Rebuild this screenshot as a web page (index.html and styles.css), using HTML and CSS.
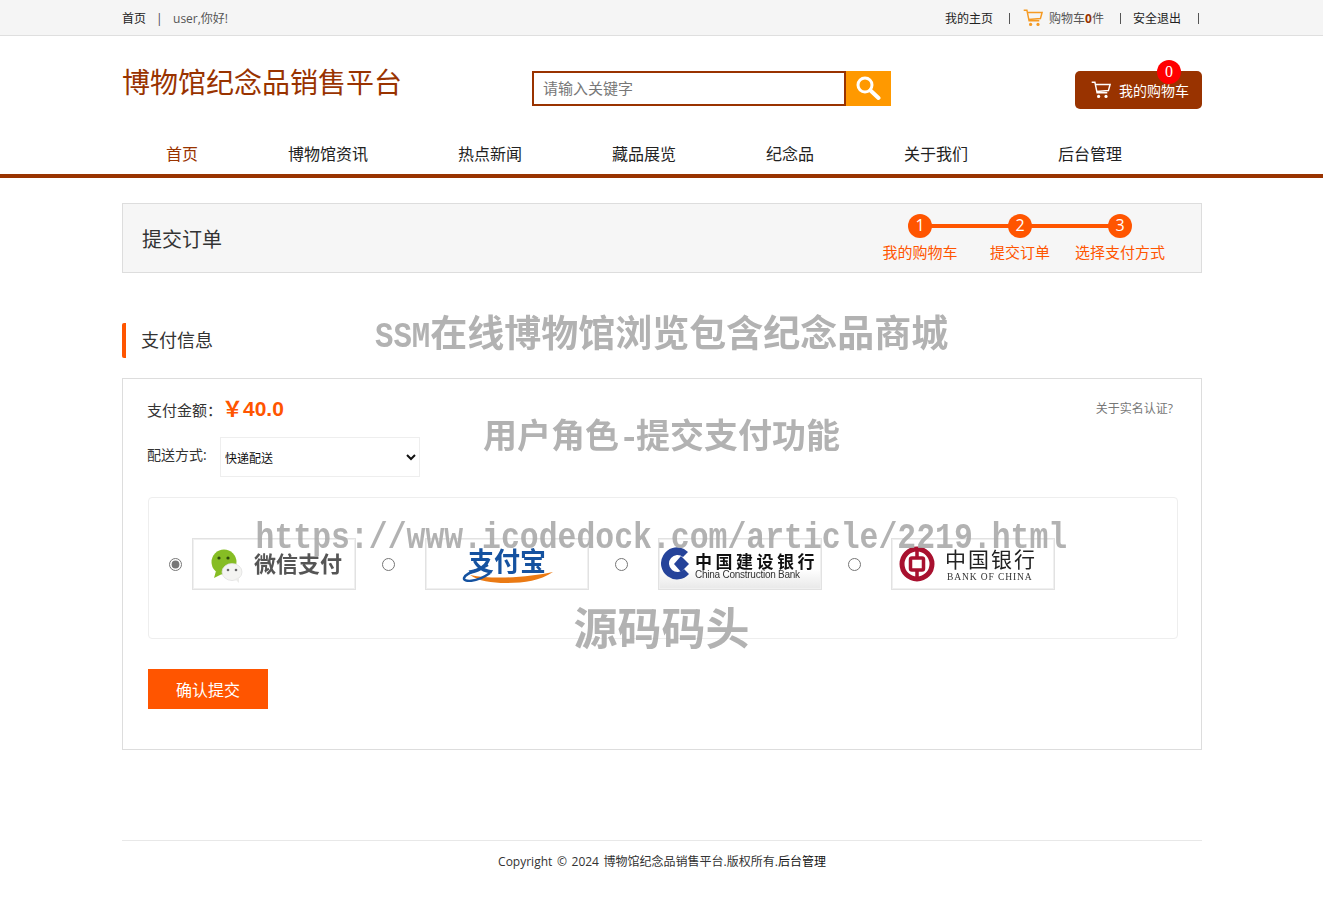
FILE: index.html
```html
<!DOCTYPE html>
<html lang="zh-CN">
<head>
<meta charset="utf-8">
<title>提交订单</title>
<link rel="stylesheet" href="styles.css">
</head>
<body>
<div class="page">
  <div class="topbar">
    <div class="wrap topbar-in">
      <div class="top-left">
        <a class="tl-home">首页</a><span class="tl-sep">|</span><span class="tl-user">user,你好!</span>
      </div>
      <div class="top-right">
        <a class="tr-a">我的主页</a><i class="tr-sep tr-sep-1"></i>
        <svg class="tr-cart" viewBox="0 0 20 18" width="20" height="18"><path d="M0.7 1.2h3.2l2.2 10.600h10.200M4.500 3.400h14.600l-1.700 6.200-11.900 1" fill="none" stroke="#f59a23" stroke-width="1.500"/><circle cx="7.600" cy="15.400" r="1.600" fill="#f59a23"/><circle cx="15" cy="15.400" r="1.600" fill="#f59a23"/></svg>
        <span class="tr-count">购物车<b>0</b>件</span><i class="tr-sep tr-sep-2"></i>
        <a class="tr-a">安全退出</a><i class="tr-sep tr-sep-3"></i>
      </div>
    </div>
  </div>

  <div class="wrap header">
    <h1 class="logo">博物馆纪念品销售平台</h1>
    <form class="search">
      <input class="search-input" type="text" placeholder="请输入关键字">
      <button class="search-btn" type="button" aria-label="搜索">
        <svg viewBox="0 0 26 26" width="26" height="26"><circle cx="10" cy="10" r="7" fill="none" stroke="#fff" stroke-width="3"/><path d="M15.500 15.500l8 7.500" stroke="#fff" stroke-width="4" stroke-linecap="round"/></svg>
      </button>
    </form>
    <a class="cart-btn">
      <svg viewBox="0 0 20 18" width="20" height="18"><path d="M0.7 1.2h3.2l2.2 10.600h10.200M4.500 3.400h14.600l-1.700 6.200-11.900 1" fill="none" stroke="#fff" stroke-width="1.500"/><circle cx="7.600" cy="15.400" r="1.600" fill="#fff"/><circle cx="15" cy="15.400" r="1.600" fill="#fff"/></svg>
      <span>我的购物车</span>
      <em class="badge">0</em>
    </a>
  </div>

  <nav class="nav">
    <div class="wrap nav-in">
      <a class="nav-item active">首页</a>
      <a class="nav-item">博物馆资讯</a>
      <a class="nav-item">热点新闻</a>
      <a class="nav-item">藏品展览</a>
      <a class="nav-item">纪念品</a>
      <a class="nav-item">关于我们</a>
      <a class="nav-item">后台管理</a>
    </div>
  </nav>

  <main class="wrap">
    <section class="steps-box">
      <h2 class="steps-title">提交订单</h2>
      <ol class="steps">
        <li class="step"><span class="step-num">1</span><span class="step-label">我的购物车</span></li>
        <li class="step"><span class="step-num">2</span><span class="step-label">提交订单</span></li>
        <li class="step"><span class="step-num">3</span><span class="step-label">选择支付方式</span></li>
      </ol>
    </section>

    <h3 class="sec-title">支付信息</h3>

    <section class="panel">
      <div class="amount-row">
        <span class="label label-pay">支付金额：</span><strong class="amount">￥40.0</strong>
        <a class="realname">关于实名认证?</a>
      </div>
      <div class="ship-row">
        <span class="label label-ship">配送方式:</span>
        <select class="ship-select"><option>快递配送</option></select>
      </div>
      <div class="pay-box">
        <label class="pay-opt pay-first">
          <input type="radio" name="pay" checked>
          <span class="pay-img">
            <svg viewBox="0 0 162 50" width="162" height="50">
              <circle cx="31" cy="23" r="12.500" fill="#86bd24"/><path d="M23 32l-2 7 8-4z" fill="#86bd24"/>
              <circle cx="26" cy="19" r="1.600" fill="#2d4a0a"/><circle cx="35" cy="19" r="1.600" fill="#2d4a0a"/>
              <ellipse cx="39" cy="33" rx="10" ry="8.500" fill="#f4f4f2" stroke="#dcdcdc" stroke-width=".7"/><path d="M42 40l4 4v-6z" fill="#ececea"/>
              <circle cx="35" cy="31" r="1.300" fill="#666"/><circle cx="43" cy="31" r="1.300" fill="#666"/>
              <text class="t-wx" x="61" y="33">微信支付</text>
            </svg>
          </span>
        </label>
        <label class="pay-opt">
          <input type="radio" name="pay">
          <span class="pay-img">
            <svg viewBox="0 0 162 50" width="162" height="50">
              <path d="M44 36c24 5 60 2 83-3-14 9-28 11-47 11-14 0-28-2-36-8z" fill="#ea7a14"/>
              <path d="M62 26c-8 5-22 7-24 13-1 4 12 5 26-5" fill="none" stroke="#1552a0" stroke-width="2.400"/>
              <text class="t-ali" x="42" y="32">支付宝</text>
            </svg>
          </span>
        </label>
        <label class="pay-opt">
          <input type="radio" name="pay">
          <span class="pay-img pay-ccb">
            <svg viewBox="0 0 162 50" width="162" height="50">
              <path d="M25 10a16 16 0 1 0 5 25l-5-5a8.500 8.500 0 1 1-1-12l5-5z" fill="#25439a"/>
              <path d="M22 17l8 8-8 8-7-8z" fill="#25439a"/>
              <text class="t-ccb" x="36" y="29">中国建设银行</text>
              <text class="t-ccb-en" x="36" y="39">China Construction Bank</text>
            </svg>
          </span>
        </label>
        <label class="pay-opt">
          <input type="radio" name="pay">
          <span class="pay-img">
            <svg viewBox="0 0 162 50" width="162" height="50">
              <circle cx="25" cy="25" r="15" fill="none" stroke="#a8112f" stroke-width="5"/>
              <rect x="18.500" y="19" width="13" height="12" rx="1.500" fill="none" stroke="#a8112f" stroke-width="3.500"/>
              <path d="M25 10v9M25 31v9" stroke="#a8112f" stroke-width="3.500"/>
              <text class="t-boc" x="53" y="28">中国银行</text>
              <text class="t-boc-en" x="55" y="41">BANK OF CHINA</text>
            </svg>
          </span>
        </label>
      </div>
      <button class="submit" type="button">确认提交</button>
    </section>
  </main>

  <footer class="wrap footer">Copyright © 2024 博物馆纪念品销售平台.版权所有.<a class="footer-link">后台管理</a></footer>

  <div class="watermark">
    <p class="wm wm-1"><span class="wm-latin wm-ssm">SSM</span>在线博物馆浏览包含纪念品商城</p>
    <p class="wm wm-2">用户角色<span class="wm-latin">-</span>提交支付功能</p>
    <p class="wm wm-3"><span class="wm-latin wm-url">https://www.icodedock.com/article/2219.html</span></p>
    <p class="wm wm-4">源码码头</p>
  </div>
</div>
</body>
</html>
```
FILE: styles.css
```css
* { box-sizing: border-box; }
html, body { margin: 0; padding: 0; background: #fff; }
body { font-family: "Open Sans", "Noto Sans CJK SC", sans-serif; color: #333; font-size: 14px; }
p, h1, h2, h3, ol { margin: 0; padding: 0; font-weight: normal; }
ol { list-style: none; }
a { color: inherit; text-decoration: none; }
.page { position: relative; height: 914px; overflow: hidden; }
.wrap { width: 1080px; margin-left: 122px; }

.topbar { height: 36px; background: #f5f5f5; border-bottom: 1px solid #dfdfdf; font-size: 12px; line-height: 37px; }
.topbar-in { display: flex; justify-content: space-between; }
.top-left { display: flex; color: #222; }
.tl-sep { margin: 0 14px 0 10px; color: #444; width: 3px; }
.tl-user { color: #555; }
.top-right { display: flex; align-items: center; color: #222; height: 36px; }
.tr-sep { width: 1px; height: 11px; background: #555; margin: 0 14px 0 16px; }
.tr-sep-1 { margin-right: 13px; }
.tr-sep-2 { margin-right: 12px; }
.tr-sep-3 { margin: 0 3px 0 17px; }
.tr-cart { margin-right: 6px; }
.tr-count { color: #555; }
.tr-count b { color: #993300; }

.header { position: relative; height: 96px; display: flex; align-items: flex-start; }
.logo { font-size: 28px; line-height: 40px; margin-top: 26px; color: #993300; width: 410px; }
.search { display: flex; margin-top: 35px; height: 35px; }
.search-input { width: 314px; height: 35px; border: 2px solid #993300; padding: 0 9px 3px; font: 15px "Noto Sans CJK SC", sans-serif; color: #333; outline: none; }
.search-input::placeholder { color: #777; }
.search-btn { width: 45px; height: 35px; border: 0; padding: 1px 2px 0 0; background: #ff9900; }
.cart-btn { position: relative; margin: 35px 0 0 184px; width: 127px; height: 38px; background: #993300; color: #fff; border-radius: 5px; display: flex; align-items: center; padding: 0 0 1px 16px; font-size: 14px; gap: 8px; white-space: nowrap; }
.badge { position: absolute; left: 82px; top: -11px; width: 24px; height: 24px; border-radius: 50%; background: #f00; color: #fff; text-align: center; font: normal 16px/24px "Liberation Serif", "Noto Sans CJK SC", serif; }

.nav { height: 46px; border-bottom: 4px solid #993300; }
.nav-in { display: flex; }
.nav-item { padding: 0 45px; font-size: 16px; line-height: 44px; color: #222; white-space: nowrap; }
.nav-item:first-child { padding-left: 44px; }
.nav-item.active { color: #993300; }

.steps-box { margin-top: 25px; height: 70px; background: #f6f6f6; border: 1px solid #ddd; display: flex; justify-content: space-between; }
.steps-title { font-size: 20px; line-height: 71px; padding-left: 19px; color: #333; }
.steps { display: flex; padding: 10px 31px 0 0; }
.step { position: relative; width: 100px; display: flex; flex-direction: column; align-items: center; }
.step + .step::before { content: ""; position: absolute; left: -39px; width: 78px; top: 10px; height: 4px; background: #ff5500; }
.step-num { position: relative; width: 24px; height: 24px; border-radius: 50%; background: #ff5500; color: #fff; text-align: center; font-size: 16px; line-height: 23px; }
.step-label { font-size: 15px; line-height: 22px; margin-top: 3px; color: #ff5500; white-space: nowrap; }

.sec-title { margin-top: 50px; height: 35px; border-left: 4px solid #ff5500; border-radius: 2px; padding-left: 15px; font-size: 18px; line-height: 35px; color: #333; }

.panel { margin-top: 20px; height: 372px; border: 1px solid #ddd; padding: 0 24px 0 25px; }
.label { color: #333; font-size: 14px; }
.label-ship { width: 73px; margin-left: -1px; }
.amount-row { position: relative; display: flex; align-items: baseline; height: 58px; padding-top: 13px; }
.amount { font: bold 21px/34px "Liberation Sans", "Noto Sans CJK SC", sans-serif; color: #ff5500; }
.label-pay { width: 75px; margin-left: -1px; font-size: 15px; white-space: nowrap; }
.realname { position: absolute; right: 4px; top: 21px; font-size: 12px; line-height: 18px; color: #777; }
.ship-row { display: flex; align-items: flex-start; line-height: 36px; }
.ship-select { width: 200px; height: 40px; border: 1px solid #eee; background: #fff; font: 12px "Noto Sans CJK SC", sans-serif; color: #111; outline: none; }
.pay-box { width: 1030px; margin-top: 20px; height: 142px; border: 1px solid #eee; border-radius: 4px; padding: 40px 0 0 20px; display: flex; gap: 26px; }
.pay-opt { display: flex; align-items: flex-start; }
.pay-opt input { width: 13px; height: 13px; margin: 20px 30px 0 0; accent-color: #777; }
.pay-first input { margin-right: 10px; }
.pay-img { display: block; width: 164px; height: 52px; border: 1px solid #e2e2e2; background: #fff; box-shadow: inset 0 0 0 1px #f0f0f0; }
.pay-img svg { display: block; filter: blur(.3px); }
.pay-ccb { background: linear-gradient(#fff 60%, #e8e8e8); }
.t-wx { font: bold 22px "Noto Sans CJK SC", sans-serif; fill: #555; }
.t-ali { font: bold 26px "Noto Sans CJK SC", sans-serif; fill: #1552a0; }
.t-ccb { font: bold 17px "Noto Sans CJK SC", sans-serif; fill: #111; letter-spacing: 3.500px; }
.t-ccb-en { font: 10px "Liberation Sans", sans-serif; fill: #333; letter-spacing: -.25px; }
.t-boc { font: 21px "Noto Sans CJK SC", sans-serif; fill: #222; letter-spacing: 2px; }
.t-boc-en { font: 9.500px "Liberation Serif", serif; fill: #333; letter-spacing: .9px; }
.submit { display: block; margin-top: 30px; width: 120px; height: 40px; border: 0; background: #ff5500; color: #fff; font: 16px "Noto Sans CJK SC", sans-serif; }

.footer { margin-top: 90px; border-top: 1px solid #e8e8e8; padding-top: 11px; text-align: center; font-size: 12px; line-height: 20px; color: #333; word-spacing: 1.500px; }
.footer-link { color: #111; }

.watermark { position: absolute; left: 0; top: 0; width: 100%; display: flex; flex-direction: column; align-items: center; padding-top: 308px; pointer-events: none; color: #aaa; font-family: "Noto Sans CJK SC", sans-serif; white-space: nowrap; opacity: .9; }
.wm { line-height: 46px; font-weight: bold; }
.wm-latin { font-family: "Liberation Mono", monospace; letter-spacing: -.1em; }
.wm-ssm { display: inline-block; letter-spacing: 0; transform: scaleX(.83); transform-origin: left center; margin-right: -11px; }
.wm-url { display: inline-block; letter-spacing: 0; transform: scaleX(.85); }
.wm-1 { font-size: 37px; }
.wm-2 { font-size: 34px; margin-top: 51px; }
.wm-3 { font-size: 37px; margin-top: 47px; }
.wm-4 { font-size: 44px; margin-top: 42px; }
```
